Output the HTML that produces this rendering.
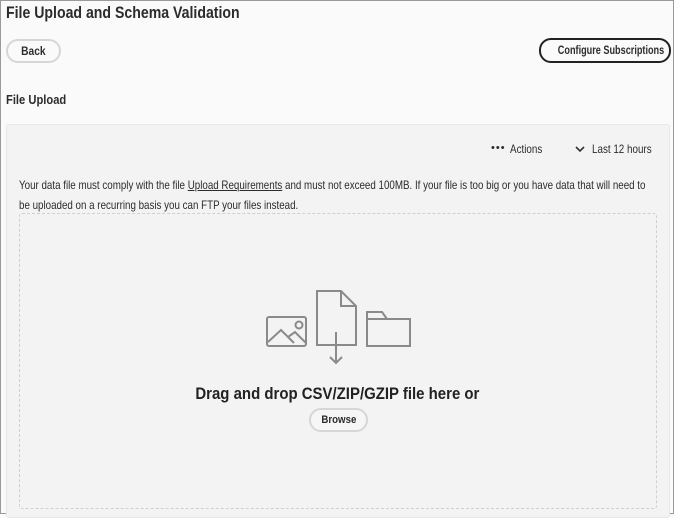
<!DOCTYPE html>
<html><head><style>
body{margin:0;width:674px;height:514px;overflow:hidden;background:#fafafa;font-family:"Liberation Sans",sans-serif;color:#2c2c2c}
.frame{position:absolute;left:0;top:0;width:672px;height:512px;border:1px solid #9a9a9a;}
.a{position:absolute;white-space:nowrap}
.s{transform-origin:0 0}
.btn{position:absolute;border-radius:12px;font-weight:bold;font-size:12px;text-align:center;box-sizing:border-box;background:#fafafa;white-space:nowrap}
</style></head><body>
<div class="frame"></div>
<div class="a s" style="left:6px;top:3px;font-size:17px;font-weight:bold;color:#2c2c2c;transform:scaleX(0.83)">File Upload and Schema Validation</div>
<div class="btn" style="left:6px;top:39px;width:55px;height:24px;line-height:20px;border:2px solid #d6d6d6"><span style="display:inline-block;transform:scaleX(0.85)">Back</span></div>
<div class="btn" style="left:539px;top:38px;width:132px;height:25px;line-height:21px;border:2px solid #222"><span style="display:inline-block;transform:scaleX(0.76)">Configure Subscriptions</span></div>
<div class="a s" style="left:6px;top:92px;font-size:13px;font-weight:bold;transform:scaleX(0.86)">File Upload</div>
<div class="a" style="left:6px;top:124px;width:662px;height:392px;background:#f3f3f3;border:1px solid #e8e8e8;border-radius:3px"></div>
<div class="a" style="left:491px;top:142px;font-size:11px;letter-spacing:1px">•••</div>
<div class="a s" style="left:510px;top:142px;font-size:12px;transform:scaleX(0.82)">Actions</div>
<svg class="a" style="left:575px;top:145px" width="10" height="8"><path d="M1 2L5 6L9 2" stroke="#333" stroke-width="1.6" fill="none"/></svg>
<div class="a s" style="left:592px;top:142px;font-size:12px;transform:scaleX(0.82)">Last 12 hours</div>
<div class="a s" style="left:19px;top:178px;font-size:12px;transform:scaleX(0.815)">Your data file must comply with the file <u>Upload Requirements</u> and must not exceed 100MB. If your file is too big or you have data that will need to</div>
<div class="a s" style="left:19px;top:198px;font-size:12px;transform:scaleX(0.815)">be uploaded on a recurring basis you can FTP your files instead.</div>
<div class="a" style="left:19px;top:213px;width:636px;height:294px;border:1.5px dashed #cfcfcf;border-radius:3px"></div>
<svg class="a" style="left:260px;top:285px" width="160" height="85" fill="none" stroke="#8a8a8a" stroke-width="2">
<rect x="7" y="32" width="39" height="29" rx="2"/>
<path d="M8 57L21 45L34 58M28 52L35 47L46 58"/>
<circle cx="39" cy="40" r="3.5"/>
<path d="M57 6H81L96 21V60H57Z M81 6V21H96"/>
<path d="M76 47V78M70 72L76 78L82 72"/>
<path d="M107 27V61H150V34H127L122 27Z M107 34H127"/>
</svg>
<div class="a" style="left:0;width:674px;top:384px;text-align:center;font-size:17px;font-weight:bold;color:#222"><span style="display:inline-block;transform:scaleX(0.88)">Drag and drop CSV/ZIP/GZIP file here or</span></div>
<div class="btn" style="left:309px;top:408px;width:59px;height:24px;line-height:20px;border:2px solid #d6d6d6;font-size:11px;background:#f6f6f6"><span style="display:inline-block;transform:scaleX(0.88)">Browse</span></div>
</body></html>
